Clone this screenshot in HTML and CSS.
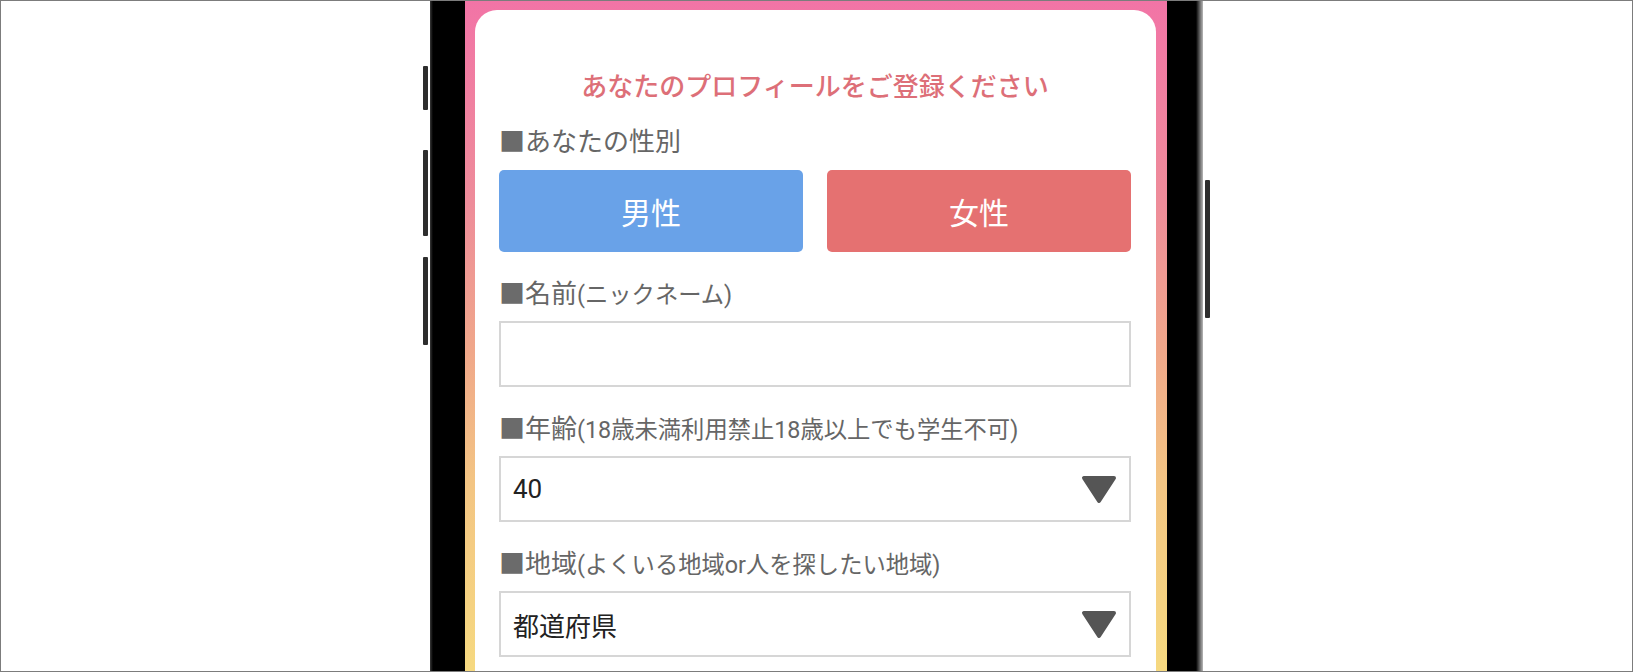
FILE: index.html
```html
<!DOCTYPE html>
<html lang="ja">
<head>
<meta charset="utf-8">
<title>プロフィール登録</title>
<link rel="stylesheet" href="styles.css">
</head>
<body>
<div class="frame">
  <div class="stage">
    <div class="side side-left">
      <div class="hw hw-1"></div>
      <div class="hw hw-2"></div>
      <div class="hw hw-3"></div>
    </div>
    <div class="phone">
      <div class="screen">
        <div class="card">
          <div class="title">あなたのプロフィールをご登録ください</div>

          <div class="label"><span class="sq">■</span>あなたの性別</div>
          <div class="gender">
            <div class="gbtn male">男性</div>
            <div class="gbtn female">女性</div>
          </div>

          <div class="label"><span class="sq">■</span>名前<span class="note">(ニックネーム)</span></div>
          <div class="field"></div>

          <div class="label"><span class="sq">■</span>年齢<span class="note">(18歳未満利用禁止18歳以上でも学生不可)</span></div>
          <div class="field select">
            <span class="value">40</span>
            <svg class="caret" width="36" height="29" viewBox="0 0 36 29"><path d="M3 3 L33 3 L18 26 Z" fill="#555" stroke="#555" stroke-width="4" stroke-linejoin="round"/></svg>
          </div>

          <div class="label"><span class="sq">■</span>地域<span class="note">(よくいる地域or人を探したい地域)</span></div>
          <div class="field select">
            <span class="value">都道府県</span>
            <svg class="caret" width="36" height="29" viewBox="0 0 36 29"><path d="M3 3 L33 3 L18 26 Z" fill="#555" stroke="#555" stroke-width="4" stroke-linejoin="round"/></svg>
          </div>
        </div>
      </div>
    </div>
    <div class="side side-right">
      <div class="hw hw-r"></div>
    </div>
  </div>
</div>
</body>
</html>
```

FILE: styles.css
```css
html, body {
  margin: 0;
  padding: 0;
  background: #ffffff;
  overflow: hidden;
}

.frame {
  width: 1633px;
  height: 672px;
  box-sizing: border-box;
  border: 1px solid #7c7c7c;
  overflow: hidden;
  background: #ffffff;
  font-family: Roboto, "Noto Sans CJK JP", sans-serif;
}

.stage {
  display: flex;
  justify-content: center;
  height: 100%;
}

.side {
  width: 5px;
  display: flex;
  flex-direction: column;
}

.side-left {
  margin-right: 2px;
}

.side-right {
  margin-left: 2px;
}

.hw {
  width: 5px;
  background: #2e2e2e;
  border-radius: 1px;
}

.hw-1 { margin-top: 65px; height: 44px; }
.hw-2 { margin-top: 40px; height: 86px; }
.hw-3 { margin-top: 21px; height: 88px; }
.hw-r { margin-top: 179px; height: 138px; }

.phone {
  width: 773px;
  height: 100%;
  box-sizing: border-box;
  padding: 0 36px 0 35px;
  background: linear-gradient(to right, #3a3a3a 0, #000 3px, #000 calc(100% - 7px), #6a6a6a calc(100% - 3px), #b8b8b8 100%);
}

.screen {
  height: 100%;
  box-sizing: border-box;
  padding: 9px 11px 0 10px;
  background: linear-gradient(to bottom, #f274a6 0%, #ee8c9a 30%, #f0a78a 52%, #f3c583 72%, #f6d980 100%);
  overflow: hidden;
}

.card {
  background: #ffffff;
  border-radius: 22px 22px 0 0;
  padding: 60px 25px 0 24px;
  min-height: 800px;
}

.title {
  font-size: 26px;
  line-height: 34px;
  font-weight: 500;
  color: #dd6f78;
  text-align: center;
}

.label {
  font-size: 26px;
  line-height: 34px;
  color: #666666;
  margin-top: 25px;
  white-space: nowrap;
}

.title + .label {
  margin-top: 21px;
}

.sq {
  color: #6b6b6b;
}

.note {
  font-size: 23.3px;
}

.gender {
  display: grid;
  grid-template-columns: 1fr 1fr;
  gap: 24px;
  margin-top: 11px;
}

.gbtn {
  height: 82px;
  border-radius: 5px;
  color: #ffffff;
  font-size: 30px;
  display: flex;
  align-items: center;
  justify-content: center;
}

.male {
  background: #69a2e8;
}

.female {
  background: #e57171;
}

.field {
  margin-top: 9px;
  height: 66px;
  box-sizing: border-box;
  border: 2px solid #d6d6d6;
  background: #ffffff;
}

.select {
  display: flex;
  align-items: center;
  justify-content: space-between;
  padding: 0 12px 0 12px;
}

.value {
  font-size: 26px;
  color: #222222;
}

.caret {
  display: block;
}
```
